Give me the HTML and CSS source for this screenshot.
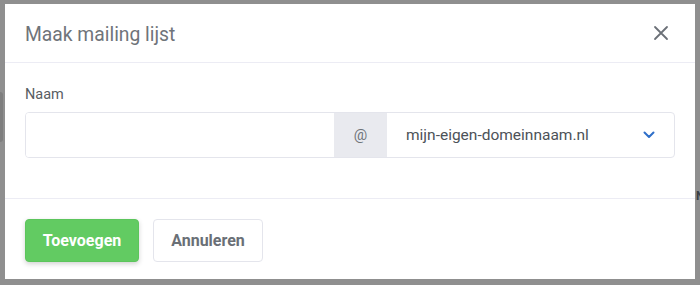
FILE: index.html
```html
<!DOCTYPE html>
<html>
<head>
<meta charset="utf-8">
<link rel="stylesheet" href="styles.css">
</head>
<body>
<div class="backdrop">
  <div class="behind-left"></div>
  <div class="modal">
    <div class="modal-header">
      <h1 class="modal-title">Maak mailing lijst</h1>
      <button class="close" aria-label="Sluiten">
        <svg width="16" height="16" viewBox="0 0 16 16"><path d="M2 2L14 14M14 2L2 14" stroke="#6b7077" stroke-width="1.8" stroke-linecap="round" fill="none"/></svg>
      </button>
    </div>
    <div class="modal-body">
      <label class="label">Naam</label>
      <div class="input-group">
        <input class="input" type="text">
        <span class="addon">@</span>
        <div class="select">
          <span class="select-text">mijn-eigen-domeinnaam.nl</span>
          <svg width="12" height="8" viewBox="0 0 12 8"><path d="M1.5 1.5L6 6L10.5 1.5" stroke="#2f6fc9" stroke-width="2" fill="none" stroke-linecap="round" stroke-linejoin="round"/></svg>
        </div>
      </div>
    </div>
    <div class="modal-footer">
      <button class="btn btn-primary">Toevoegen</button>
      <button class="btn btn-secondary">Annuleren</button>
    </div>
  </div>
  <div class="behind-right">N</div>
</div>
</body>
</html>
```
FILE: styles.css
```css
* { box-sizing: border-box; }
html, body { margin: 0; padding: 0; }
body {
  background: #8f8f8f;
  font-family: Roboto, "Liberation Sans", Arial, sans-serif;
  width: 700px;
  height: 285px;
  overflow: hidden;
}
.backdrop {
  display: flex;
  padding: 4px 0 0 5px;
  position: relative;
}
.behind-left {
  position: absolute;
  left: 0;
  top: 92px;
  width: 3px;
  height: 50px;
  background: #7e7e7e;
  border-radius: 0 3px 3px 0;
}
.behind-right {
  position: absolute;
  left: 696px;
  top: 189px;
  width: 4px;
  overflow: hidden;
  font-size: 12px;
  font-weight: 700;
  color: #3a3f45;
}
.modal {
  width: 690px;
  height: 275px;
  background: #fff;
  display: flex;
  flex-direction: column;
}
.modal-header {
  height: 59px;
  flex: none;
  border-bottom: 1px solid #ececf4;
  display: flex;
  align-items: center;
  justify-content: space-between;
  padding: 0 26px 0 20px;
}
.modal-title {
  margin: 0;
  font-size: 19.3px;
  font-weight: 400;
  color: #6f747a;
  padding-top: 2px;
}
.close {
  border: 0;
  background: none;
  padding: 0;
  display: flex;
  cursor: pointer;
}
.modal-body {
  padding: 22px 20px 0 20px;
  height: 136px;
  flex: none;
  border-bottom: 1px solid #ececf4;
}
.label {
  display: block;
  font-size: 14.5px;
  line-height: 20px;
  color: #585d63;
  margin-bottom: 7px;
}
.input-group {
  display: flex;
  height: 46px;
  border: 1px solid #e4e5ec;
  border-radius: 4px;
  overflow: hidden;
}
.input {
  width: 308px;
  border: 0;
  outline: none;
  font: inherit;
  padding: 0 12px;
}
.addon {
  width: 53px;
  background: #e9eaef;
  display: flex;
  align-items: center;
  justify-content: center;
  font-size: 15px;
  color: #6f747a;
}
.select {
  flex: 1;
  display: flex;
  align-items: center;
  justify-content: space-between;
  padding: 0 19px 0 19px;
}
.select-text {
  font-size: 15.5px;
  color: #4d5258;
}
.modal-footer {
  padding: 20px 20px;
  display: flex;
  gap: 14px;
}
.btn {
  height: 43px;
  border-radius: 4px;
  font-family: Roboto, "Liberation Sans", Arial, sans-serif;
  font-size: 16px;
  font-weight: 700;
  cursor: pointer;
}
.btn-primary {
  width: 114px;
  background: #62cb62;
  border: 1px solid #5cc55c;
  color: #fff;
  box-shadow: 0 2px 5px rgba(0,0,0,0.18);
}
.btn-secondary {
  width: 110px;
  background: #fff;
  border: 1px solid #e4e5ec;
  color: #6a6f76;
}
```
